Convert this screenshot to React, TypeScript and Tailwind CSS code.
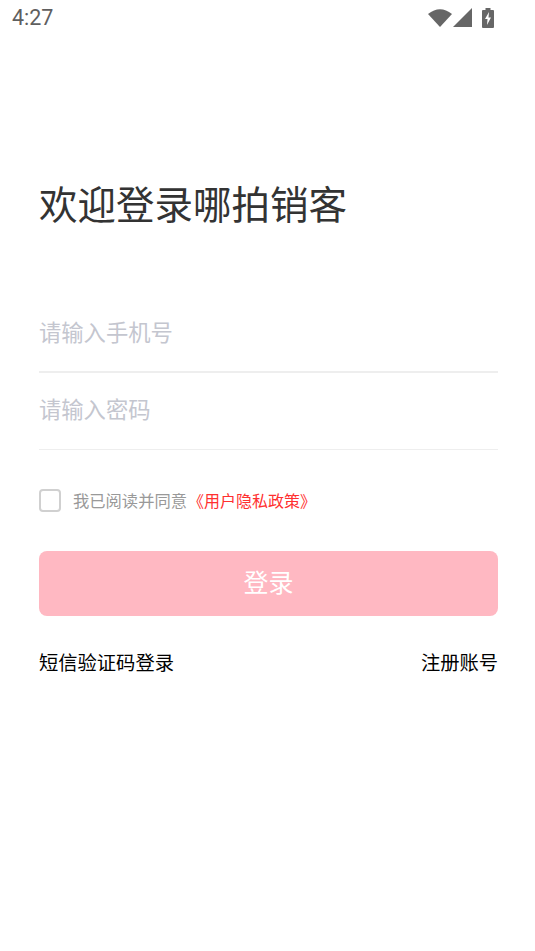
const cjk = "font-['Noto_Sans_CJK_SC','Noto_Sans_CJK_JP',sans-serif]";

function StatusBar() {
  return (
    <div className="flex h-[37px] items-center justify-between pl-3 pr-[41px]">
      <span className="font-['Roboto',sans-serif] text-[21.5px] font-normal text-[#5f5f5f]">4:27</span>
      <div className="flex items-center pb-[2px]">
        <svg width="24" height="19" viewBox="0 0 24 19" className="text-[#666666]">
          <path d="M0 6 Q12 -3.5 24 6 L12 19 Z" fill="currentColor" />
        </svg>
        <svg width="20" height="19" viewBox="0 0 20 19" className="text-[#666666]">
          <path d="M20 0 V19 H1 Z" fill="currentColor" />
        </svg>
        <svg width="12" height="20" viewBox="0 0 12 20" className="ml-[10px] text-[#666666]">
          <path d="M3.5 0 H8.5 V2 H11 Q12 2 12 3 V19 Q12 20 11 20 H1 Q0 20 0 19 V3 Q0 2 1 2 H3.5 Z" fill="currentColor" />
          <path d="M7 4 L3 11 H5.5 L5 17 L9 9.5 H6.5 Z" fill="#ffffff" />
        </svg>
      </div>
    </div>
  );
}

export default function App() {
  return (
    <div className={`min-h-[951px] w-[535px] bg-white ${cjk}`}>
      <StatusBar />
      <div className="pl-[39px] pr-[37px] pt-[139px]">
        <h1 className="text-[38.5px] leading-[52px] font-normal text-[#333333]">欢迎登录哪拍销客</h1>

        <div className="mt-[67px] flex h-[78px] items-center border-b-2 border-[#eeeeee] pb-[2px] text-[22.3px] text-[#c4c6cf]">
          请输入手机号
        </div>
        <div className="flex h-[77px] items-center border-b border-[#eeeeee] pb-[4px] text-[22.3px] text-[#c4c6cf]">
          请输入密码
        </div>

        <div className="mt-[38px] flex items-center">
          <div className="h-[23px] w-[22px] rounded-[4px] border-2 border-[#d0d0d0]" />
          <span className="ml-[12px] text-[16.3px] leading-[24px] text-[#999999]">我已阅读并同意</span>
          <span className="ml-[1px] text-[16px] leading-[24px] text-[#ff3030]">《用户隐私政策》</span>
        </div>

        <button className="mt-[39px] flex h-[65px] w-full items-center justify-center rounded-[8px] bg-[#ffb8c2] pb-[4px] text-[25px] text-white">
          登录
        </button>

        <div className="mt-[32px] flex items-center justify-between text-[19.3px] leading-[28px] text-black">
          <span>短信验证码登录</span>
          <span>注册账号</span>
        </div>
      </div>
    </div>
  );
}
